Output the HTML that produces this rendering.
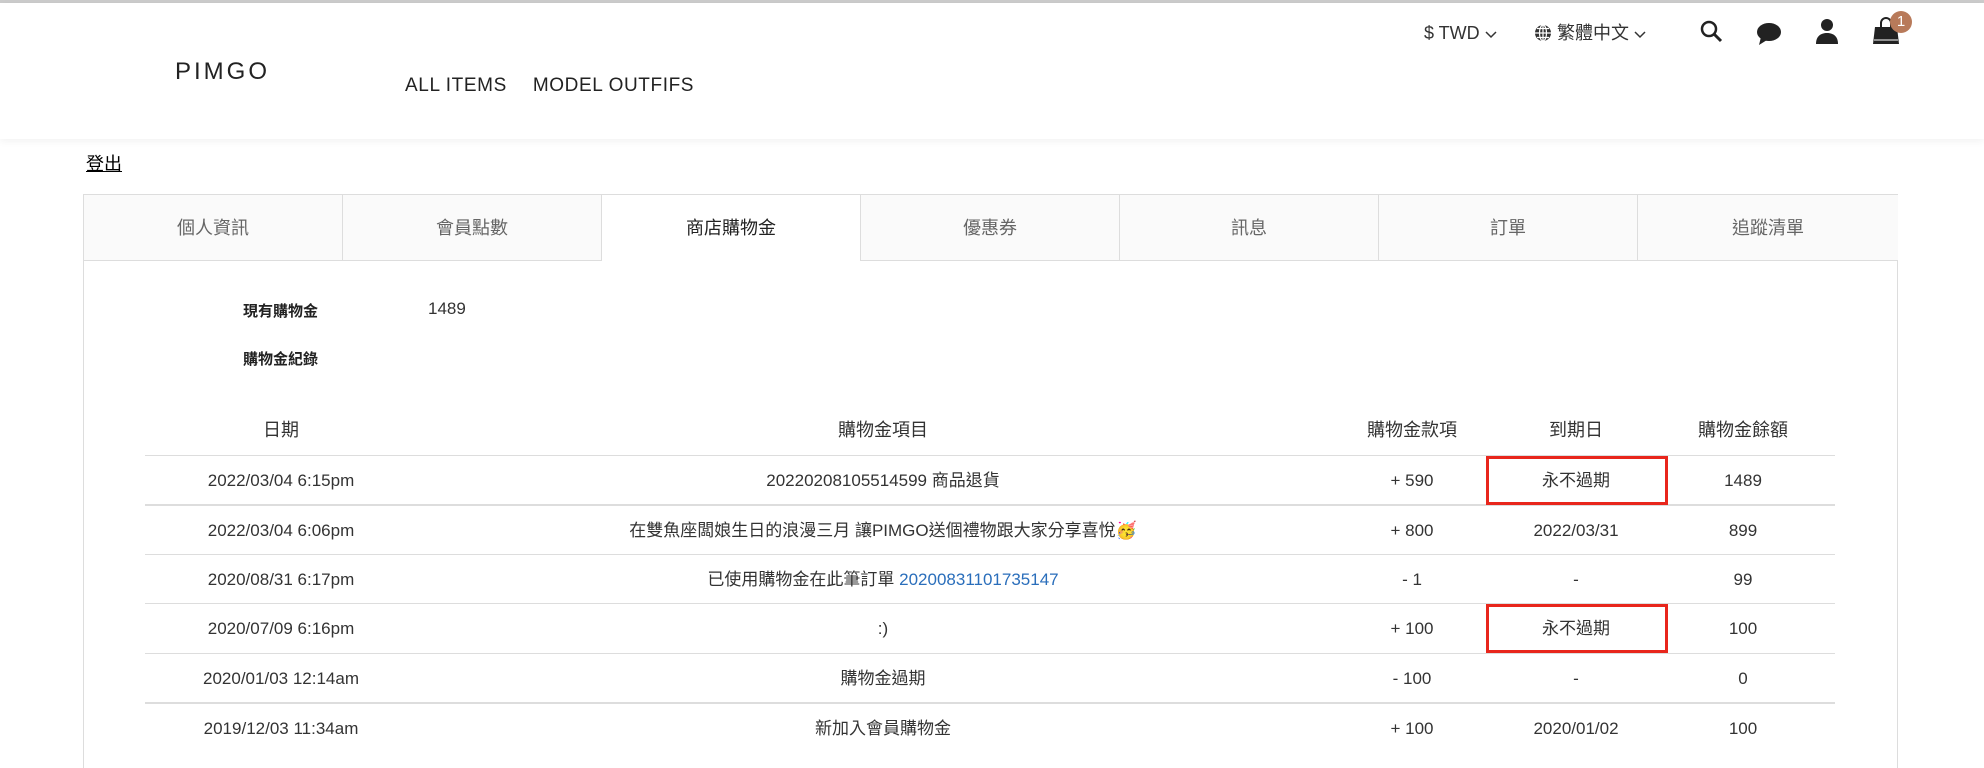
<!DOCTYPE html>
<html style="height:768px;overflow:hidden"><head><meta charset="utf-8"><style>
*{margin:0;padding:0;box-sizing:border-box}
body{width:1984px;height:768px;overflow:hidden;background:#fff;font-family:"Liberation Sans","Noto Sans CJK TC",sans-serif;color:#333;position:relative}
.topline{position:absolute;left:0;top:0;width:1984px;height:3px;background:#ccc}
.header{position:absolute;left:0;top:3px;width:1984px;height:136px;background:#fff;box-shadow:0 2px 8px rgba(0,0,0,0.06)}
.logo{position:absolute;left:175px;top:55px;font-size:24px;letter-spacing:3px;color:#222;font-weight:300}
.nav{position:absolute;left:405px;top:72px;font-size:19px;color:#222;letter-spacing:0.6px}
.nav span{margin-right:26px}
.tr{position:absolute;top:18px;font-size:18px;color:#333;line-height:24px}
.logout{position:absolute;left:86px;top:150px;font-size:18px;text-decoration:underline;color:#000}
.tabs{position:absolute;left:83px;top:194px;width:1815px;height:580px;border:1px solid #ddd}
.tab{position:absolute;top:0;height:66px;width:259px;background:#fafafa;border-right:1px solid #ddd;border-bottom:1px solid #ddd;text-align:center;line-height:66px;font-size:18px;color:#666}
.tab.act{background:#fff;border-bottom:none;color:#222}
.lab{position:absolute;font-size:15px;font-weight:bold;color:#222}
.row{position:absolute;left:145px;width:1690px;height:49px;font-size:17px;color:#333}
.row div{position:absolute;top:0;line-height:49px;text-align:center;transform:translateX(-50%);white-space:nowrap}
.line{position:absolute;left:145px;width:1690px;height:1px;background:#ddd}
.red{position:absolute;left:1486px;width:182px;height:49px;border:3px solid #e8261c}
</style></head><body>
<div class="topline"></div>
<div class="header">
<div class="logo">PIMGO</div>
<div class="nav"><span>ALL ITEMS</span><span>MODEL OUTFIFS</span></div>
<div class="tr" style="left:1424px">$ TWD <svg width="12" height="8" viewBox="0 0 12 8"><path d="M1 1l5 5 5-5" fill="none" stroke="#333" stroke-width="1.5"/></svg></div>
<div class="tr" style="left:1534px"><svg width="18" height="18" viewBox="0 0 18 18" style="vertical-align:-3px"><circle cx="9" cy="9" r="8" fill="#333"/><path d="M1 9h16M9 1v16M3 4.5h12M3 13.5h12" stroke="#fff" stroke-width="1.2"/><ellipse cx="9" cy="9" rx="3.5" ry="8" fill="none" stroke="#fff" stroke-width="1.2"/></svg> 繁體中文 <svg width="12" height="8" viewBox="0 0 12 8"><path d="M1 1l5 5 5-5" fill="none" stroke="#333" stroke-width="1.5"/></svg></div>
<svg style="position:absolute;left:1700px;top:17px" width="24" height="24" viewBox="0 0 24 24"><circle cx="9" cy="9" r="7" fill="none" stroke="#222" stroke-width="2.5"/><path d="M14 14l7 7" stroke="#222" stroke-width="3"/></svg>
<svg style="position:absolute;left:1756px;top:19px" width="26" height="24" viewBox="0 0 26 24"><ellipse cx="13" cy="10" rx="12" ry="9" fill="#222"/><path d="M5 15l-2 8 8-5z" fill="#222"/></svg>
<svg style="position:absolute;left:1814px;top:15px" width="26" height="26" viewBox="0 0 26 26"><circle cx="13" cy="7" r="6" fill="#222"/><path d="M2 26c0-8 5-11 11-11s11 3 11 11z" fill="#222"/></svg>
<svg style="position:absolute;left:1872px;top:12px" width="28" height="30" viewBox="0 0 28 30"><path d="M9 12V8a5 5 0 0 1 10 0v4" fill="none" stroke="#222" stroke-width="2"/><path d="M3 12h22l2 17H1z" fill="#222"/><path d="M2 25h24" stroke="#fff" stroke-width="1"/></svg>
<div style="position:absolute;left:1890px;top:8px;width:22px;height:22px;border-radius:50%;background:#b87a5a;color:#fff;font-size:15px;text-align:center;line-height:22px">1</div>
</div>
<div class="logout">登出</div>
<div class="tabs">
<div class="tab" style="left:0">個人資訊</div>
<div class="tab" style="left:259px">會員點數</div>
<div class="tab act" style="left:518px">商店購物金</div>
<div class="tab" style="left:777px">優惠券</div>
<div class="tab" style="left:1036px">訊息</div>
<div class="tab" style="left:1295px">訂單</div>
<div class="tab" style="left:1554px;width:260px;border-right:none">追蹤清單</div>
</div>
<div class="lab" style="left:243px;top:300px">現有購物金</div>
<div style="position:absolute;left:428px;top:299px;font-size:17px">1489</div>
<div class="lab" style="left:243px;top:348px">購物金紀錄</div>
<div class="row" style="top:406px;font-size:18px"><div style="left:136px">日期</div><div style="left:738px">購物金項目</div><div style="left:1267px">購物金款項</div><div style="left:1431px">到期日</div><div style="left:1598px">購物金餘額</div></div>
<div class="line" style="top:455px"></div>
<div class="row" style="top:456px"><div style="left:136px">2022/03/04 6:15pm</div><div style="left:738px">20220208105514599 商品退貨</div><div style="left:1267px">+ 590</div><div style="left:1431px">永不過期</div><div style="left:1598px">1489</div></div>
<div class="line" style="top:504px;height:2px"></div>
<div class="row" style="top:506px"><div style="left:136px">2022/03/04 6:06pm</div><div style="left:738px">在雙魚座闆娘生日的浪漫三月 讓PIMGO送個禮物跟大家分享喜悅🥳</div><div style="left:1267px">+ 800</div><div style="left:1431px">2022/03/31</div><div style="left:1598px">899</div></div>
<div class="line" style="top:554px"></div>
<div class="row" style="top:555px"><div style="left:136px">2020/08/31 6:17pm</div><div style="left:738px">已使用購物金在此筆訂單 <span style="color:#2a6ebb">20200831101735147</span></div><div style="left:1267px">- 1</div><div style="left:1431px">-</div><div style="left:1598px">99</div></div>
<div class="line" style="top:603px"></div>
<div class="row" style="top:604px"><div style="left:136px">2020/07/09 6:16pm</div><div style="left:738px">:)</div><div style="left:1267px">+ 100</div><div style="left:1431px">永不過期</div><div style="left:1598px">100</div></div>
<div class="line" style="top:653px"></div>
<div class="row" style="top:654px"><div style="left:136px">2020/01/03 12:14am</div><div style="left:738px">購物金過期</div><div style="left:1267px">- 100</div><div style="left:1431px">-</div><div style="left:1598px">0</div></div>
<div class="line" style="top:702px;height:2px"></div>
<div class="row" style="top:704px"><div style="left:136px">2019/12/03 11:34am</div><div style="left:738px">新加入會員購物金</div><div style="left:1267px">+ 100</div><div style="left:1431px">2020/01/02</div><div style="left:1598px">100</div></div>
<div class="red" style="top:456px"></div>
<div class="red" style="top:604px"></div>
</body></html>
